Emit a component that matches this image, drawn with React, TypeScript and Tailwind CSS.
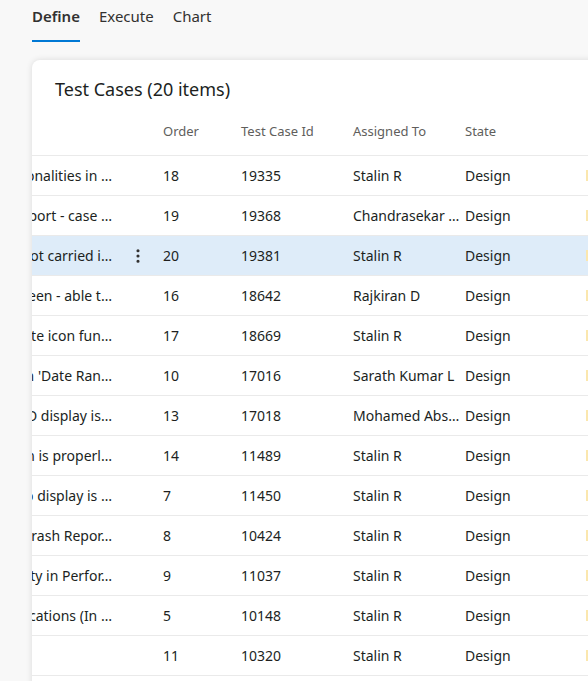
import { EllipsisVertical } from "lucide-react";

interface TestCaseRow {
  title: string;
  order: number;
  id: number;
  assignedTo: string;
  state: string;
}

const rows: TestCaseRow[] = [
  { title: "Functionalities in …", order: 18, id: 19335, assignedTo: "Stalin R", state: "Design" },
  { title: "Export - case …", order: 19, id: 19368, assignedTo: "Chandrasekar Venkatesan", state: "Design" },
  { title: "is not carried i…", order: 20, id: 19381, assignedTo: "Stalin R", state: "Design" },
  { title: "Screen - able t…", order: 16, id: 18642, assignedTo: "Rajkiran D", state: "Design" },
  { title: "Delete icon fun…", order: 17, id: 18669, assignedTo: "Stalin R", state: "Design" },
  { title: "in 'Date Ran…", order: 10, id: 17016, assignedTo: "Sarath Kumar L", state: "Design" },
  { title: "OD display is…", order: 13, id: 17018, assignedTo: "Mohamed Abshar", state: "Design" },
  { title: "Them is properl…", order: 14, id: 11489, assignedTo: "Stalin R", state: "Design" },
  { title: "Info display is …", order: 7, id: 11450, assignedTo: "Stalin R", state: "Design" },
  { title: "Crash Repor…", order: 8, id: 10424, assignedTo: "Stalin R", state: "Design" },
  { title: "Activity in Perfor…", order: 9, id: 11037, assignedTo: "Stalin R", state: "Design" },
  { title: "Notifications (In …", order: 5, id: 10148, assignedTo: "Stalin R", state: "Design" },
  { title: "", order: 11, id: 10320, assignedTo: "Stalin R", state: "Design" },
];

const Tabs = () => {
  return (
    <div className="flex h-[42px] items-start gap-[19px] pl-8 text-[15px] text-[#323130]">
      <div className="flex flex-col">
        <span className="pt-[4px] font-semibold leading-[24px]">Define</span>
        <span className="mt-[12px] h-[2px] w-full bg-[#0078d4]" />
      </div>
      <span className="pt-[4px] leading-[24px]">Execute</span>
      <span className="pt-[4px] leading-[24px]">Chart</span>
    </div>
  );
};

const Row = ({ row, selected }: { row: TestCaseRow; selected: boolean }) => {
  return (
    <div
      className={`flex h-[40px] items-center border-b border-[#eaeaea] text-[14px] text-[#201f1e] ${
        selected ? "bg-[#deecf9]" : "bg-white"
      }`}
    >
      <div className="flex w-[93px] shrink-0 justify-end overflow-hidden pr-[13px]">
        <span className="whitespace-nowrap">{row.title}</span>
      </div>
      <div className="flex w-[26px] shrink-0 justify-center">
        {selected && <EllipsisVertical size={18} strokeWidth={2.2} className="text-[#323130]" />}
      </div>
      <div className="w-[78px] shrink-0 pl-3">{row.order}</div>
      <div className="w-[112px] shrink-0 pl-3">{row.id}</div>
      <div className="w-[112px] shrink-0 pl-3">
        <div className="w-[108px] truncate">{row.assignedTo}</div>
      </div>
      <div className="w-[133px] shrink-0 pl-3">{row.state}</div>
      <div className="h-[11px] w-[8px] shrink-0 bg-[#fbe7ae]" />
    </div>
  );
};

const App = () => {
  return (
    <div
      className="h-[681px] w-[588px] overflow-hidden bg-[#f8f8f8]"
      style={{ fontFamily: '"Segoe UI", "Noto Sans", sans-serif' }}
    >
      <Tabs />
      <div className="ml-8 mt-[18px] w-[620px] overflow-hidden rounded-tl-[8px] bg-white pb-8 shadow-[0_0_6px_rgba(0,0,0,0.12)]">
        <div className="pl-[23px] pt-[16px] pb-[14px] text-[18px] leading-[26px] text-[#201f1e]">
          Test Cases (20 items)
        </div>
        <div className="flex h-[40px] items-start border-b border-[#eaeaea] pt-[5px] text-[13px] leading-[20px] text-[#605e5c]">
          <div className="w-[119px] shrink-0" />
          <div className="w-[78px] shrink-0 pl-3">Order</div>
          <div className="w-[112px] shrink-0 pl-3">Test Case Id</div>
          <div className="w-[112px] shrink-0 pl-3">Assigned To</div>
          <div className="w-[133px] shrink-0 pl-3">State</div>
        </div>
        {rows.map((row) => (
          <Row key={row.id} row={row} selected={row.order === 20} />
        ))}
      </div>
    </div>
  );
};

export default App;
